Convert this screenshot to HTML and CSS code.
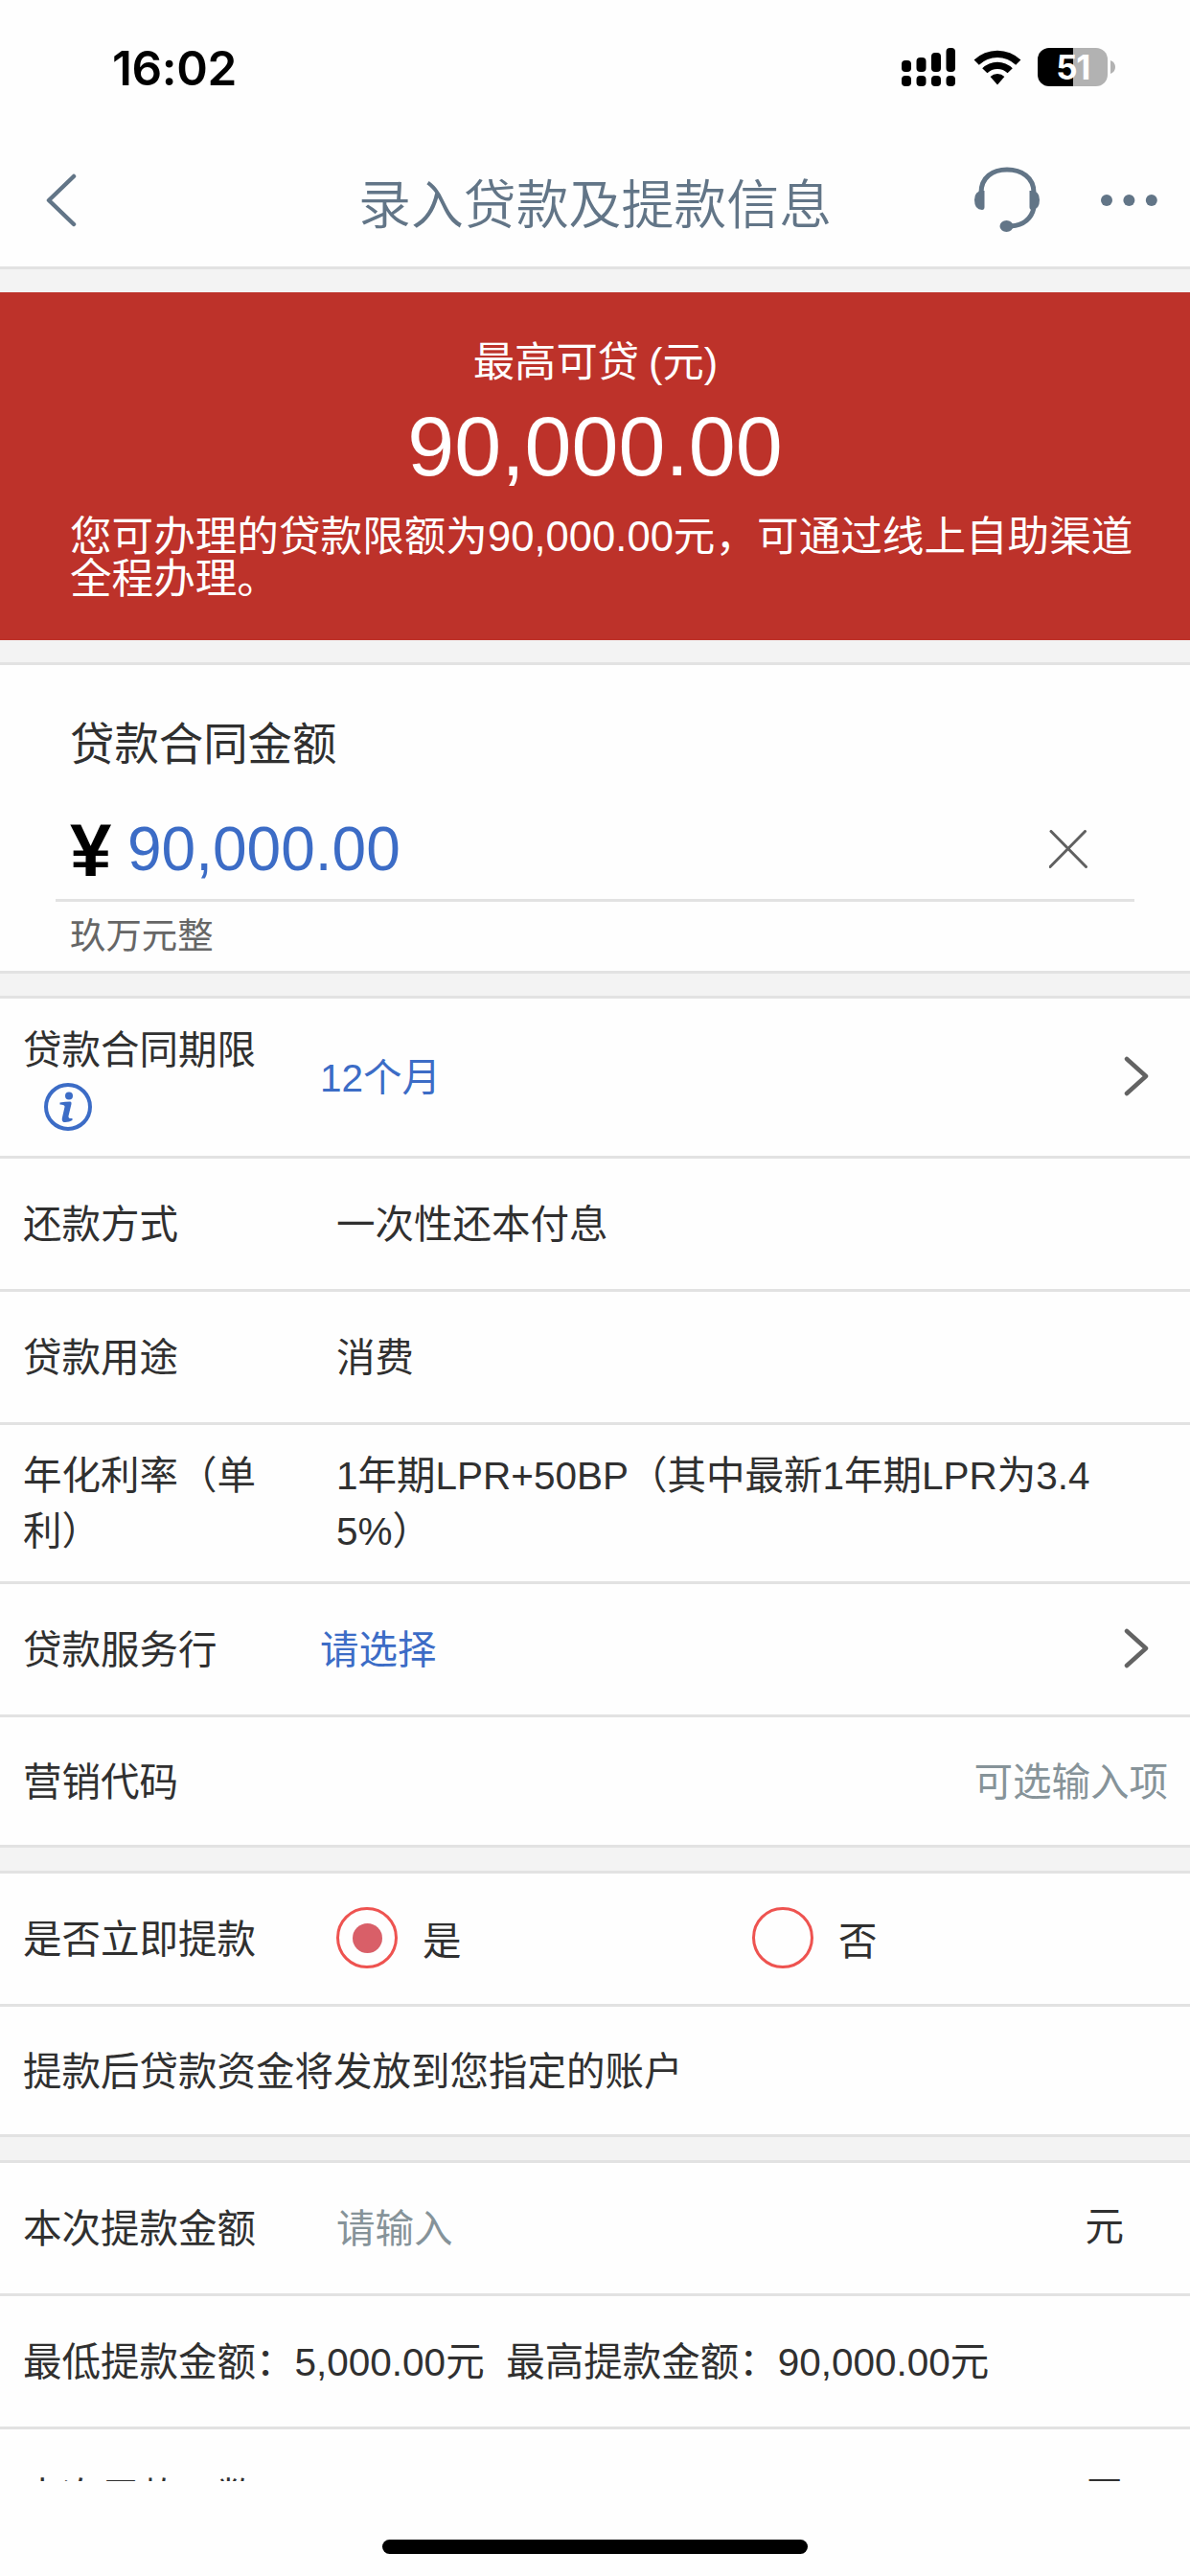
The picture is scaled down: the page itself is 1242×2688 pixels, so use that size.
FILE: index.html
```html
<!DOCTYPE html>
<html lang="zh-CN">
<head>
<meta charset="utf-8">
<title>录入贷款及提款信息</title>
<link rel="stylesheet" href="styles.css">
</head>
<body>
<div class="screen">
  <header class="top">
    <div class="status">
      <span class="clock">16:02</span>
      <div class="status-icons">
        <svg class="signal" width="57" height="40" viewBox="0 0 57 40">
          <rect x="0" y="13" width="10" height="12" rx="4"/><rect x="15.5" y="10" width="10" height="15" rx="4"/><rect x="31" y="5" width="10" height="20" rx="4"/><rect x="46.5" y="0" width="9.5" height="25" rx="4"/>
          <rect x="0" y="29" width="10" height="11" rx="4"/><rect x="15.5" y="29" width="10" height="11" rx="4"/><rect x="31" y="29" width="10" height="11" rx="4"/><rect x="46.5" y="29" width="9.5" height="11" rx="4"/>
        </svg>
        <svg class="wifi" width="50" height="37" viewBox="0 0 50 37">
          <path d="M0.6 10.6A35 35 0 0 1 49.4 10.6L44.2 15.8A27.5 27.5 0 0 0 5.8 15.8Z"/>
          <path d="M9.2 19.2A22.5 22.5 0 0 1 40.8 19.2L35.6 24.3A15.2 15.2 0 0 0 14.4 24.3Z"/>
          <path d="M17.6 28A10.8 10.8 0 0 1 32.4 28L25 36.4Z"/>
        </svg>
        <div class="battery"><span class="battery-level">51</span></div>
        <svg class="battery-cap" width="5" height="14" viewBox="0 0 5 14"><path d="M0 0Q5 2 5 7T0 14Z"/></svg>
      </div>
    </div>
    <nav class="nav">
      <svg class="back" width="34" height="58" viewBox="0 0 34 58"><path d="M31 4L5 29L31 54"/></svg>
      <h1 class="title">录入贷款及提款信息</h1>
      <svg class="headset" width="72" height="72" viewBox="0 0 72 72">
        <path class="line" d="M9 28C9 12 21 4 36 4S64 12 64 28M64 44C61 57 52 62 40 63"/>
        <path d="M12.5 26Q2 25 2 35.500T10 46Q12.500 46 12.500 43ZM59.500 26Q70 25 70 35.500T62 46Q59.500 46 59.500 43Z"/>
        <ellipse cx="35.500" cy="63" rx="7" ry="6"/>
      </svg>
      <svg class="more" width="60" height="12" viewBox="0 0 60 12"><circle cx="6" cy="6" r="6"/><circle cx="29.400" cy="6" r="6"/><circle cx="52.800" cy="6" r="6"/></svg>
    </nav>
  </header>

  <main class="content">
    <section class="banner">
      <div class="banner-label">最高可贷 (元)</div>
      <div class="banner-amount">90,000.00</div>
      <p class="banner-note">您可办理的贷款限额为90,000.00元，可通过线上自助渠道全程办理。</p>
    </section>

    <section class="amount">
      <div class="amount-label">贷款合同金额</div>
      <div class="amount-field">
        <span class="yen">¥</span>
        <span class="amount-value">90,000.00</span>
        <svg class="clear" width="40" height="40" viewBox="0 0 40 40"><path d="M2 1.500L38.500 38.500M37.500 1.500L1 38.500"/></svg>
      </div>
      <div class="amount-words">玖万元整</div>
    </section>

    <section class="group">
      <div class="row row-term">
        <div class="label">贷款合同期限
          <svg class="info" width="50" height="50" viewBox="0 0 50 50">
            <circle cx="25" cy="25" r="23" class="ring"/><circle cx="26" cy="13.500" r="4"/>
            <path d="M16.500 20.500Q22 19.500 27.500 19.500Q29 20 28.500 22L25.500 34.500Q25 37.500 29.500 37V39Q25.500 41.500 20.500 41Q18 40 19 36L21.500 25Q22 22.500 16.500 22.500Z"/>
          </svg>
        </div>
        <div class="value link">12个月</div>
        <svg class="chevron" width="26" height="42" viewBox="0 0 26 42"><path d="M3 3L23 21L3 39"/></svg>
      </div>
      <div class="row"><div class="label">还款方式</div><div class="value">一次性还本付息</div></div>
      <div class="row row-use"><div class="label">贷款用途</div><div class="value">消费</div></div>
      <div class="row row-rate"><div class="label">年化利率（单<br>利）</div><div class="value">1年期LPR+50BP（其中最新1年期LPR为3.4<br>5%）</div></div>
      <div class="row row-bank">
        <div class="label">贷款服务行</div><div class="value link">请选择</div>
        <svg class="chevron" width="26" height="42" viewBox="0 0 26 42"><path d="M3 3L23 21L3 39"/></svg>
      </div>
      <div class="row row-code"><div class="label">营销代码</div><div class="value hint end">可选输入项</div></div>
    </section>

    <section class="group">
      <div class="row row-radio">
        <div class="label">是否立即提款</div>
        <div class="choices">
          <div class="choice"><span class="radio on"></span><span>是</span></div>
          <div class="choice"><span class="radio"></span><span>否</span></div>
        </div>
      </div>
      <div class="row row-note">提款后贷款资金将发放到您指定的账户</div>
    </section>

    <section class="group">
      <div class="row row-draw"><div class="label">本次提款金额</div><div class="value hint">请输入</div><span class="unit">元</span></div>
      <div class="row row-limit">最低提款金额：5,000.00元&nbsp; 最高提款金额：90,000.00元</div>
      <div class="row row-days"><div class="label">本次用款天数</div><div class="value"></div><span class="unit">天</span></div>
    </section>
  </main>

  <footer class="home"><span class="home-bar"></span></footer>
</div>
</body>
</html>
```
FILE: styles.css
```css
* { box-sizing: border-box; }
body {
  margin: 0;
  background: #fefefe;
  color: #303030;
  font: 400 40.5px/58px "Liberation Sans", "Noto Sans CJK SC", sans-serif;
}
.screen {
  width: 1242px;
  height: 2688px;
  display: flex;
  flex-direction: column;
  overflow: hidden;
}

/* Status bar and navigation */
.top { height: 281px; border-bottom: 3px solid #e2e2e2; flex: none; }
.status {
  height: 140px;
  padding: 0 78px 0 117px;
  display: flex;
  justify-content: space-between;
  align-items: center;
}
.clock {
  font: 600 49.5px/60px Inter, sans-serif;
  letter-spacing: -0.4px;
  padding-top: 1px;
  color: #000;
}
.status-icons { display: flex; align-items: center; }
.wifi { margin-left: 18px; }
.battery {
  width: 73px;
  height: 40px;
  margin: 0 3px 0 17px;
  border-radius: 12px;
  background: linear-gradient(90deg, #000 37px, #b2b2b2 37px);
  display: flex;
  justify-content: center;
}
.battery-level { font: 700 35px/41px Inter, sans-serif; color: #fff; letter-spacing: -1.5px; }
.battery-cap { fill: #b2b2b2; }
.nav {
  height: 138px;
  padding: 0 33px 0 46px;
  display: grid;
  grid-template-columns: 328px 1fr 146px 72px 62px 60px;
  align-items: center;
  fill: #627587;
}
.back { fill: none; stroke: #627587; stroke-width: 4.500; stroke-linecap: round; stroke-linejoin: round; }
.title { margin: 9px 0 0; font-size: 54.9px; font-weight: 350; white-space: nowrap; color: #627587; }
.headset { grid-column: 4; }
.headset .line { fill: none; stroke: #627587; stroke-width: 5; }
.more { grid-column: 6; }

/* Scrolling area */
.content { height: 2308px; flex: none; overflow: hidden; background: #f3f3f3; padding-top: 24px; }
.banner {
  height: 363px;
  padding: 44px 50px 0 73px;
  background: #bd322a;
  color: #fff;
  font-size: 43.6px;
}
.banner-label { margin-right: 22px; font-size: 43.3px; line-height: 58px; text-align: center; word-spacing: -2px; }
.banner-amount { margin: 14px 23px 0 0; font-size: 88px; line-height: 90px; text-align: center; }
.banner-note { margin: 27px 0 0; line-height: 44px; }

.amount {
  height: 325px;
  margin-top: 23px;
  padding: 53px 58px 0;
  background: #fefefe;
  border-top: 3px solid #e2e2e2;
  border-bottom: 3px solid #e2e2e2;
}
.amount-label { padding-left: 15px; font-size: 46.400px; line-height: 60px; }
.amount-field {
  height: 134px;
  padding: 26px 49px 0 15px;
  display: flex;
  align-items: center;
  border-bottom: 3px solid #e2e2e2;
}
.yen { width: 60px; font-size: 78px; font-weight: 700; color: #000; padding-top: 3px; }
.amount-value { flex: 1; font-size: 64px; color: #3c6cc6; }
.clear { fill: none; stroke: #606060; stroke-width: 3; stroke-linecap: round; }
.amount-words { padding: 7px 0 0 15px; font-size: 37.400px; color: #666; }

/* Form rows */
.group { margin-top: 24px; border-top: 3px solid #e2e2e2; background: #fefefe; }
.amount + .group { margin-top: 23px; }
.row {
  height: 139px;
  padding: 2px 23px 0 24px;
  display: flex;
  align-items: center;
  border-bottom: 3px solid #e2e2e2;
}
.row-term { height: 167px; }
.row-rate { height: 166px; padding-top: 0; }
.row-code, .row-note { height: 136px; }
.label { width: 327px; flex: none; }
.value { flex: 1; white-space: nowrap; }
.link { margin-left: -17px; color: #3c6cc6; }
.hint { color: #869399; }
.end { text-align: right; }
.info { display: block; margin: 5px 0 3px 22px; fill: #3c6cc6; }
.ring { fill: none; stroke: #3c6cc6; stroke-width: 4; }
.chevron { margin: -4px 20px 0 0; fill: none; stroke: #636363; stroke-width: 4.500; stroke-linecap: round; stroke-linejoin: round; }
.choices { display: flex; margin-top: -4px; }
.choice { width: 434px; display: flex; align-items: center; gap: 26px; }
.choice > span:last-child { padding-top: 7px; }
.radio { width: 64px; height: 64px; border: 3px solid #ee5350; border-radius: 50%; display: grid; place-items: center; }
.radio.on::after { content: ""; width: 31px; height: 31px; border-radius: 50%; background: #d95f68; }
.unit { margin: -4px 46px 0 0; }
.row-days { padding-top: 6px; }

.home { flex: 1; display: flex; justify-content: center; align-items: flex-end; padding-bottom: 23px; background: #fefefe; }
.home-bar { width: 444px; height: 15px; border-radius: 8px; background: #000; }
```
